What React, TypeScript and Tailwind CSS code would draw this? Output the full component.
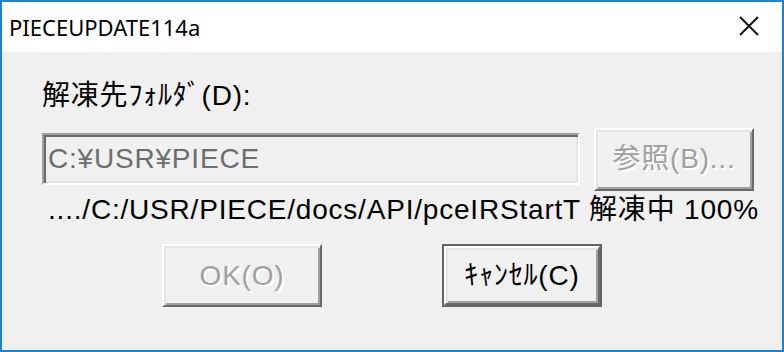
const jp = "font-['Liberation_Sans','Noto_Sans_CJK_JP',sans-serif] tracking-[0.8px]";

function RaisedButton({
  label,
  disabled,
  isDefault,
}: {
  label: string;
  disabled?: boolean;
  isDefault?: boolean;
}) {
  const inner = (
    <div
      className={`flex h-full w-full items-center justify-center border-2 border-t-white border-l-white border-r-[#696969] border-b-[#696969] bg-[#f0f0f0] shadow-[inset_2px_2px_0_#e3e3e3,inset_-2px_-2px_0_#a0a0a0] text-[28px] leading-none ${jp} ${
        disabled ? "text-[#a0a0a0] [text-shadow:2px_2px_0_#ffffff]" : "text-black"
      }`}
    >
      {label}
    </div>
  );
  if (isDefault) {
    return <div className="h-[63px] w-[160px] border-2 border-[#646464]">{inner}</div>;
  }
  return <div className="h-[63px] w-[160px]">{inner}</div>;
}

export default function App() {
  return (
    <div className="flex h-[352px] w-[784px] flex-col border-2 border-[#1883d7] bg-[#f0f0f0]">
      <div className="flex h-[50px] shrink-0 items-center justify-between bg-white pl-[7px] pr-[23px]">
        <span className="font-['Noto_Sans',sans-serif] text-[22px] text-black">PIECEUPDATE114a</span>
        <svg width="20" height="20" viewBox="0 0 20 20" className="mb-[2px]">
          <path d="M1 1L19 19M19 1L1 19" stroke="#111" strokeWidth="2" />
        </svg>
      </div>
      <div className="flex flex-col pl-[40px] pt-[28px]">
        <div className={`h-[32px] text-[28px] leading-[32px] text-black ${jp}`}>解凍先ﾌｫﾙﾀﾞ(D):</div>
        <div className="mt-[16px] flex h-[62px] items-center gap-[14px]">
          <div
            className={`flex h-[52px] w-[538px] items-center border-2 border-t-[#a0a0a0] border-l-[#a0a0a0] border-r-white border-b-white bg-[#f0f0f0] pl-[4px] shadow-[inset_2px_2px_0_#696969,inset_-2px_-2px_0_#e3e3e3] text-[28px] text-[#6d6d6d] ${jp}`}
          >
            C:¥USR¥PIECE
          </div>
          <RaisedButton label="参照(B)..." disabled />
        </div>
        <div className={`flex h-[34px] items-center pl-[6px] pt-[6px] text-[28px] text-black ${jp}`}>
          ..../C:/USR/PIECE/docs/API/pceIRStartT 解凍中 100%
        </div>
        <div className="mt-[20px] flex gap-[120px] pl-[120px]">
          <RaisedButton label="OK(O)" disabled />
          <RaisedButton label="ｷｬﾝｾﾙ(C)" isDefault />
        </div>
      </div>
    </div>
  );
}
